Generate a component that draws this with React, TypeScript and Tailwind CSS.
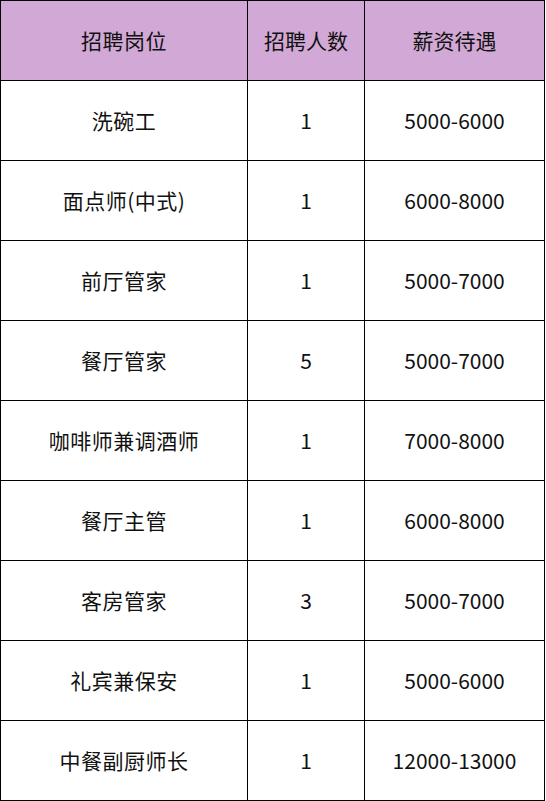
import React from "react";

const rows: [string, string, string][] = [
  ["洗碗工", "1", "5000-6000"],
  ["面点师(中式)", "1", "6000-8000"],
  ["前厅管家", "1", "5000-7000"],
  ["餐厅管家", "5", "5000-7000"],
  ["咖啡师兼调酒师", "1", "7000-8000"],
  ["餐厅主管", "1", "6000-8000"],
  ["客房管家", "3", "5000-7000"],
  ["礼宾兼保安", "1", "5000-6000"],
  ["中餐副厨师长", "1", "12000-13000"],
];

const font = {
  fontFamily: '"Noto Sans CJK SC", "Noto Sans", sans-serif',
};

function Row({ cells, header }: { cells: [string, string, string]; header?: boolean }) {
  const bg = header ? "bg-[#d2a9d6]" : "bg-white";
  const cell = `h-[80px] flex items-center justify-center pt-[1px] border-r border-b border-black text-[21px] text-[#111111] ${bg}`;
  return (
    <div className="flex">
      <div className={`${cell} w-[247px] tracking-[0.5px]`}>{cells[0]}</div>
      <div className={`${cell} w-[117px]`}>{cells[1]}</div>
      <div className={`${cell} w-[180px]`}>{cells[2]}</div>
    </div>
  );
}

export default function App() {
  return (
    <div className="w-[546px] h-[801px] bg-white" style={font}>
      <div className="w-[545px] border-l border-t border-black">
        <Row header cells={["招聘岗位", "招聘人数", "薪资待遇"]} />
        {rows.map((r, i) => (
          <Row key={i} cells={r} />
        ))}
      </div>
    </div>
  );
}
